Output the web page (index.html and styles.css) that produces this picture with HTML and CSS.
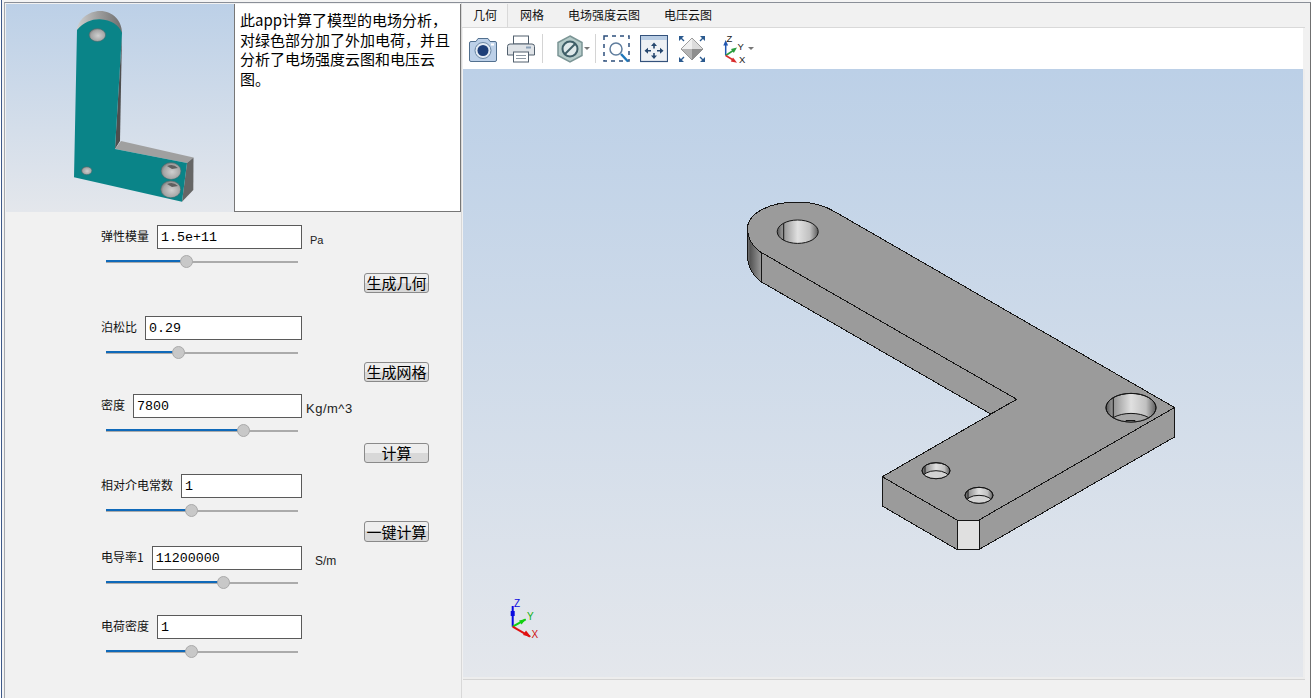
FILE: index.html
```html
<!DOCTYPE html>
<html lang="zh">
<head>
<meta charset="utf-8">
<title>电场分析</title>
<link rel="stylesheet" href="styles.css">
</head>
<body>
<div class="window">
 <div class="frame">
  <aside class="left">
    <div class="top-row">
      <div class="thumb">
        <svg class="fill-svg" viewBox="6 4 228 208">
          <defs>
            <linearGradient id="tcap" x1="0" x2="1" y1="0" y2="0">
              <stop offset="0" stop-color="#cfcfcf"/><stop offset=".45" stop-color="#a0a0a0"/><stop offset="1" stop-color="#6e6e6e"/>
            </linearGradient>
            <radialGradient id="thole" cx=".55" cy=".55" r=".6">
              <stop offset="0" stop-color="#cfcfcf"/><stop offset=".7" stop-color="#a5a5a5"/><stop offset="1" stop-color="#6f6f6f"/>
            </radialGradient>
          </defs>
          <path d="M77 30C78 20 88 11 100 11C113 11 122 21 122 33L100 30Z" fill="url(#tcap)"/>
          <polygon points="122,33 120,141 115,149" fill="#4e4e4e"/>
          <polygon points="115,149 121,141 193.500,157.500 187,163" fill="#a0a0a0"/>
          <polygon points="187,163 193.500,157.500 193.300,190 182,201.700" fill="#666"/>
          <path d="M77 30C84 22 92 19 100 19.300C111 20 119 25 122 33L115 149L187 163L182 201.700L74 177.300Z" fill="#0a8488"/>
          <ellipse cx="97.300" cy="35" rx="8.300" ry="6.500" fill="url(#thole)" stroke="#3d6d70" stroke-width=".6"/>
          <ellipse cx="86.700" cy="170.700" rx="5.200" ry="4" fill="url(#thole)" stroke="#3d6d70" stroke-width=".6"/>
          <ellipse cx="171" cy="171" rx="10" ry="8.500" fill="url(#thole)" stroke="#3d6d70" stroke-width=".6"/>
          <path d="M167 166Q173 163 178 168L172 169Z" fill="#5f5f5f"/>
          <ellipse cx="170.700" cy="189.300" rx="10" ry="8.500" fill="url(#thole)" stroke="#3d6d70" stroke-width=".6"/>
          <path d="M167 184Q173 181 178 186L172 187Z" fill="#5f5f5f"/>
        </svg>
      </div>
      <div class="desc">此app计算了模型的电场分析，对绿色部分加了外加电荷，并且分析了电场强度云图和电压云图。</div>
    </div>
    <form class="form">
      <div class="field f1">
        <div class="input-row"><span class="label">弹性模量</span><span class="input">1.5e+11</span><span class="unit u-pa">Pa</span></div>
        <div class="slider"><i class="fill" style="width:82px"></i></div>
      </div>
      <div class="btn-row b1"><button type="button" class="btn">生成几何</button></div>
      <div class="field f2">
        <div class="input-row"><span class="label">泊松比</span><span class="input">0.29</span></div>
        <div class="slider"><i class="fill" style="width:74px"></i></div>
      </div>
      <div class="btn-row b2"><button type="button" class="btn">生成网格</button></div>
      <div class="field f3">
        <div class="input-row"><span class="label">密度</span><span class="input">7800</span><span class="unit u-kg">Kg/m^3</span></div>
        <div class="slider"><i class="fill" style="width:139px"></i></div>
      </div>
      <div class="btn-row b3"><button type="button" class="btn">计算</button></div>
      <div class="field f4">
        <div class="input-row"><span class="label">相对介电常数</span><span class="input">1</span></div>
        <div class="slider"><i class="fill" style="width:87px"></i></div>
      </div>
      <div class="btn-row b4"><button type="button" class="btn btn-tall">一键计算</button></div>
      <div class="field f5">
        <div class="input-row"><span class="label">电导率1</span><span class="input">11200000</span><span class="unit u-sm">S/m</span></div>
        <div class="slider"><i class="fill" style="width:119px"></i></div>
      </div>
      <div class="field f6">
        <div class="input-row"><span class="label">电荷密度</span><span class="input">1</span></div>
        <div class="slider"><i class="fill" style="width:87px"></i></div>
      </div>
    </form>
  </aside>

  <main class="right">
    <nav class="tabs">
      <span class="tab tab-on">几何</span>
      <span class="tab">网格</span>
      <span class="tab">电场强度云图</span>
      <span class="tab">电压云图</span>
    </nav>
    <div class="toolbar">
      <svg class="tool t-camera" viewBox="0 0 28 28">
        <path d="M2 6.500H7L9 3.500H19L21 6.500H26Q27.500 6.500 27.500 8V25Q27.500 26.500 26 26.500H2Q.5 26.500 .5 25V8Q.5 6.500 2 6.500Z" fill="#bcd0e8" stroke="#52708f"/>
        <circle cx="14" cy="15.500" r="8" fill="#e4ecf4" stroke="#6a86a3"/>
        <circle cx="14" cy="15.500" r="5.500" fill="#1e3f78"/>
        <rect x="22" y="8.500" width="3" height="2" fill="#fff"/>
      </svg>
      <svg class="tool t-print" viewBox="0 0 28 28">
        <rect x="6.500" y="1" width="15" height="8" fill="#fff" stroke="#52606e"/>
        <path d="M3 9H25Q27.500 9 27.500 11.500V20H.5V11.500Q.5 9 3 9Z" fill="#dfe3e7" stroke="#52606e"/>
        <rect x="19" y="11.500" width="5" height="2" fill="#8aa0b8"/>
        <rect x="6.500" y="17" width="15" height="10" fill="#fff" stroke="#52606e"/>
        <path d="M9 20.500H19M9 23.500H19" stroke="#8d98a3"/>
      </svg>
      <span class="sep sep-a"></span>
      <svg class="tool t-hex" viewBox="0 0 26 28">
        <polygon points="13,1 25,7.500 25,20.500 13,27 1,20.500 1,7.500" fill="#b5cbc9" stroke="#7b9595" stroke-width="1.500"/>
        <circle cx="13" cy="14" r="7.500" fill="#dfe9ea" stroke="#3f5f68" stroke-width="2"/>
        <path d="M8 19L18 9" stroke="#3f5f68" stroke-width="2"/>
      </svg>
      <i class="caret c-hex"></i>
      <span class="sep sep-b"></span>
      <svg class="tool t-zoom" viewBox="0 0 28 28">
        <rect x="1" y="1" width="25" height="25" fill="none" stroke="#2d4f7c" stroke-width="1.500" stroke-dasharray="4 4"/>
        <circle cx="13" cy="14" r="6" fill="#fff" stroke="#5f7d9d" stroke-width="1.500"/>
        <path d="M18 19L25 26.500" stroke="#1f77b9" stroke-width="2.500"/>
      </svg>
      <svg class="tool t-fit" viewBox="0 0 28 28">
        <rect x=".5" y=".5" width="27" height="26" fill="#eef1f5" stroke="#34527c" stroke-width="1.200"/>
        <rect x="1" y="1" width="26" height="4" fill="#b9cde4"/>
        <path d="M14 7.500L11 11H17ZM14 24L11 20.500H17ZM4.500 15.700L8 12.700V18.700ZM23.500 15.700L20 12.700V18.700Z" fill="#26476f"/>
        <path d="M14 10V13.500M14 18V21.500M7 15.700H11M17 15.700H21" stroke="#26476f" stroke-width="1.600"/>
      </svg>
      <svg class="tool t-dia" viewBox="0 0 28 28">
        <polygon points="14,3 14,14 3,14" fill="#f0f0f0"/>
        <polygon points="14,3 25,14 14,14" fill="#dcdcdc"/>
        <polygon points="3,14 14,14 14,25" fill="#b4b4b4"/>
        <polygon points="25,14 14,14 14,25" fill="#8e8e8e"/>
        <polygon points="14,3 25,14 14,25 3,14" fill="none" stroke="#777" stroke-width=".7"/>
        <path d="M1 1H6L1 6ZM27 1H22L27 6ZM1 27H6L1 22ZM27 27H22L27 22Z" fill="#2b5a8f"/>
        <path d="M2 2L6 6M26 2L22 6M2 26L6 22M26 26L22 22" stroke="#2b5a8f" stroke-width="1.400"/>
      </svg>
      <svg class="tool t-triad" viewBox="0 0 24 30">
        <path d="M2.700 21.500V9" stroke="#2156b0" stroke-width="1.500"/>
        <path d="M2.700 6L.3 11.500H5.100Z" fill="#2156b0"/>
        <path d="M2.700 21.500L11 16" stroke="#2a9d3e" stroke-width="1.500"/>
        <path d="M14 13.500L8 15L10.800 19Z" fill="#2a9d3e"/>
        <path d="M2.700 21.500L11 26.500" stroke="#d92b2b" stroke-width="1.500"/>
        <path d="M14 28.800L10 23.500L7.800 27.500Z" fill="#d92b2b"/>
        <text x="3.500" y="7.500" class="tri-t">Z</text>
        <text x="14.500" y="16" class="tri-t">Y</text>
        <text x="16" y="28.500" class="tri-t">X</text>
      </svg>
      <i class="caret c-tri"></i>
    </div>
    <div class="view">
      <svg class="fill-svg" viewBox="463 69 840 608">
        <defs>
          <linearGradient id="cyl" x1="0" x2="1" y1="0" y2="0">
            <stop offset="0" stop-color="#777"/><stop offset=".2" stop-color="#555"/><stop offset="1" stop-color="#989898"/>
          </linearGradient>
          <linearGradient id="bore" x1="0" x2="1" y1="0" y2="0">
            <stop offset="0" stop-color="#555"/><stop offset=".1" stop-color="#8a8a8a"/><stop offset=".5" stop-color="#e0e0e0"/><stop offset=".8" stop-color="#c0c0c0"/><stop offset="1" stop-color="#5c5c5c"/>
          </linearGradient>
          <clipPath id="h1"><ellipse cx="797.700" cy="231.700" rx="20.500" ry="11.700"/></clipPath>
          <clipPath id="h2"><ellipse cx="1131" cy="407.700" rx="25" ry="14.300"/></clipPath>
          <clipPath id="h3"><ellipse cx="936" cy="470.700" rx="14" ry="8"/></clipPath>
          <clipPath id="h4"><ellipse cx="979" cy="495.300" rx="14" ry="8"/></clipPath>
        </defs>
        <g class="edge">
          <path d="M747.500 228V257Q748 272 761 281.700V252.300Q748 242 747.500 228Z" fill="url(#cyl)"/>
          <polygon points="761,252.300 1016.700,399.300 990.700,414 761,281.700" fill="#9b9b9b"/>
          <polygon points="882.300,476.700 957,520 957,549.500 882.300,506" fill="#9b9b9b"/>
          <polygon points="957,520 979,520 979,549.500 957,549.500" fill="#e0e0e0"/>
          <polygon points="979,520 1174.500,407.500 1174.500,437 979,549.500" fill="#9b9b9b"/>
          <path d="M747.500 228C748 213 770 202 797 202C812 202 826 206 837 213L1174.500 407.500L979 520H957L882.300 476.700L1016.700 399.300L761 252.300C752 246 747.500 238 747.500 228Z" fill="#9b9b9b"/>
        </g>
        <g class="edge-soft">
          <ellipse cx="797.700" cy="231.700" rx="20.500" ry="11.700" fill="url(#bore)"/>
          <path d="M783.700 223V241" clip-path="url(#h1)"/>
          <ellipse cx="1131" cy="407.700" rx="25" ry="14.300" fill="url(#bore)"/>
          <ellipse cx="1131" cy="427.700" rx="25" ry="14.300" fill="#a8a8a8" clip-path="url(#h2)"/>
          <path d="M1113.300 395V420" clip-path="url(#h2)"/>
          <path d="M1126 420.500V422M1135 420.500V422M1126 420.500H1135" clip-path="url(#h2)"/>
          <ellipse cx="1131" cy="407.700" rx="25" ry="14.300"/>
          <ellipse cx="936" cy="470.700" rx="14" ry="8" fill="url(#bore)"/>
          <ellipse cx="936" cy="478.700" rx="14" ry="8" fill="#d2d2d2" clip-path="url(#h3)"/>
          <path d="M925 464V474" clip-path="url(#h3)"/>
          <ellipse cx="936" cy="470.700" rx="14" ry="8"/>
          <ellipse cx="979" cy="495.300" rx="14" ry="8" fill="url(#bore)"/>
          <ellipse cx="979" cy="503.300" rx="14" ry="8" fill="#d2d2d2" clip-path="url(#h4)"/>
          <path d="M968 489V499" clip-path="url(#h4)"/>
          <ellipse cx="979" cy="495.300" rx="14" ry="8"/>
        </g>
        <path d="M512.700 626.700V606" stroke="#0a0ae0" stroke-width="2"/>
        <rect x="510.700" y="611" width="4" height="5" fill="#0a0ae0"/>
        <path d="M512.700 626.700L525.700 619.300" stroke="#10d010" stroke-width="2"/>
        <polygon points="526,619 519,620.500 521.500,624.500" fill="#10d010"/>
        <path d="M512.700 626.700L530 636.700" stroke="#e01010" stroke-width="2"/>
        <polygon points="531,637 526,630.500 523,635" fill="#e01010"/>
        <text x="514" y="607" class="ax ax-z">Z</text>
        <text x="527" y="620" class="ax ax-y">Y</text>
        <text x="531.500" y="638" class="ax ax-x">X</text>
      </svg>
    </div>
  </main>
 </div>
</div>
</body>
</html>
```

FILE: styles.css
```css
* { box-sizing: border-box; }
html, body { margin: 0; padding: 0; }
body {
  width: 1312px;
  height: 698px;
  overflow: hidden;
  background: #fff;
  font-family: "Noto Sans CJK SC", "Liberation Sans", sans-serif;
  color: #111;
}
.window {
  margin-left: 1px;
  width: 1310px;
  height: 698px;
  padding: 2px 0 0 2px;
  background: #f4f4f4;
  border-left: 1px solid #3f5a8a;
}
.frame {
  height: 696px;
  display: flex;
  background: #f1f1f1;
  border-top: 1px solid #8a8f98;
  border-left: 1px solid #a4a8ae;
  border-right: 1px solid #707070;
}
.left { width: 456px; flex: none; padding: 1px 0 0 1px; }
.top-row { display: flex; height: 208px; }
.thumb {
  width: 228px;
  height: 208px;
  background: linear-gradient(#bcd0e7, #e4e7ec);
}
.fill-svg { display: block; width: 100%; height: 100%; }
.desc {
  width: 227px;
  height: 208px;
  background: #fff;
  border-left: 1px solid #777;
  border-right: 1px solid #777;
  border-bottom: 1px solid #777;
  padding: 6px 5px;
  font-size: 15px;
  line-height: 19.7px;
  color: #000;
}
.form { padding-left: 95px; width: 423px; }
.field { width: 201px; }
.f1 { margin-top: 13px; }
.f2 { margin-top: 23px; }
.f3 { margin-top: 12px; }
.f4 { margin-top: 11px; }
.f5 { margin-top: 4px; }
.f6 { margin-top: 26px; }
.input-row { display: flex; height: 24px; align-items: flex-start; position: relative; }
.label { font-size: 12px; line-height: 22px; white-space: nowrap; margin-right: 8px; }
.input {
  flex: 1;
  height: 24px;
  background: #fff;
  border: 1px solid #5a5a5a;
  padding-left: 3px;
  font-family: "Liberation Mono", monospace;
  font-size: 13.33px;
  line-height: 23px;
  color: #000;
}
.unit { position: absolute; font-family: "Liberation Sans", sans-serif; font-size: 11px; white-space: nowrap; color: #222; }
.u-pa { left: 209px; top: 9px; }
.u-kg { left: 205px; top: 7px; font-size: 13px; letter-spacing: .5px; }
.u-sm { left: 214px; top: 8px; font-size: 12px; }
.slider {
  position: relative;
  margin: 6px 0 0 5px;
  width: 192px;
  height: 13px;
  background: linear-gradient(#ababab, #ababab) center / 100% 2px no-repeat;
}
.fill {
  position: absolute;
  left: 0;
  top: 5px;
  height: 2px;
  background: #0f69b9;
}
.fill::after {
  content: "";
  position: absolute;
  right: -5px;
  top: -5px;
  width: 11px;
  height: 11px;
  border-radius: 50%;
  background: #c8c8c8;
  border: 1px solid #aaa;
}
.btn-row { display: flex; justify-content: flex-end; }
.b1 { margin-top: 5px; }
.b2 { margin-top: 3px; }
.b3 { margin-top: 6px; }
.b4 { margin-top: 4px; }
.btn {
  width: 65px;
  height: 20px;
  padding: 0;
  border: 1px solid #8a8a8a;
  border-radius: 3px;
  background: linear-gradient(#eeeeee 50%, #d8d8d8 50%);
  font-family: "Noto Sans CJK SC", sans-serif;
  font-size: 15px;
  line-height: 16px;
  color: #000;
  overflow: hidden;
}
.btn-tall { height: 21px; }
.right {
  flex: 1;
  min-width: 0;
  display: flex;
  flex-direction: column;
  padding: 1px 5px 0 0;
  border-left: 1px solid #d8d8d8;
}
.tabs {
  height: 24px;
  display: flex;
  border-bottom: 1px solid #d9d9d9;
}
.tab {
  padding: 0 12px;
  font-size: 12px;
  line-height: 22px;
  color: #111;
}
.tab-on { padding: 0 10px 0 11px; background: #f4f4f4; border-right: 1px solid #d9d9d9; }
.toolbar {
  height: 41px;
  background: #fff;
  display: flex;
  align-items: center;
  margin: 0 2px 0 1px;
  padding-left: 6px;
}
.tool { display: block; flex: none; width: 28px; height: 28px; }
.t-print { margin-left: 10px; }
.t-hex { margin-left: 14px; width: 26px; }
.t-zoom { margin-left: 7px; }
.t-fit { margin-left: 9px; }
.t-dia { margin-left: 10px; }
.t-triad { margin-left: 17px; width: 24px; height: 30px; }
.sep { flex: none; width: 1px; height: 29px; background: #d4d4d4; }
.sep-a { margin-left: 7px; }
.sep-b { margin-left: 5px; }
.caret {
  flex: none;
  width: 0;
  height: 0;
  border-left: 3px solid transparent;
  border-right: 3px solid transparent;
  border-top: 3px solid #777;
}
.c-hex { margin-left: 1px; }
.c-tri { margin-left: 1px; }
.tri-t { font: 9.5px "Liberation Sans", sans-serif; fill: #222; }
.view {
  margin-left: 1px;
  width: 840px;
  height: 608px;
  background: linear-gradient(#bcd0e7, #e4e7ec);
  box-shadow: 2px 0 0 #ededed, 0 2px 0 #ededed, 2px 2px 0 #ededed, 0 3px 0 #d4d4d4, 2px 3px 0 #d4d4d4;
}
.edge { stroke: #151515; stroke-width: 1; shape-rendering: crispEdges; }
.edge-soft { stroke: #151515; stroke-width: 1; fill: none; }
.ax { font: 10px "Liberation Sans", sans-serif; }
.ax-z { fill: #0a0ae0; }
.ax-y { fill: #10b010; }
.ax-x { fill: #d01010; }
```
